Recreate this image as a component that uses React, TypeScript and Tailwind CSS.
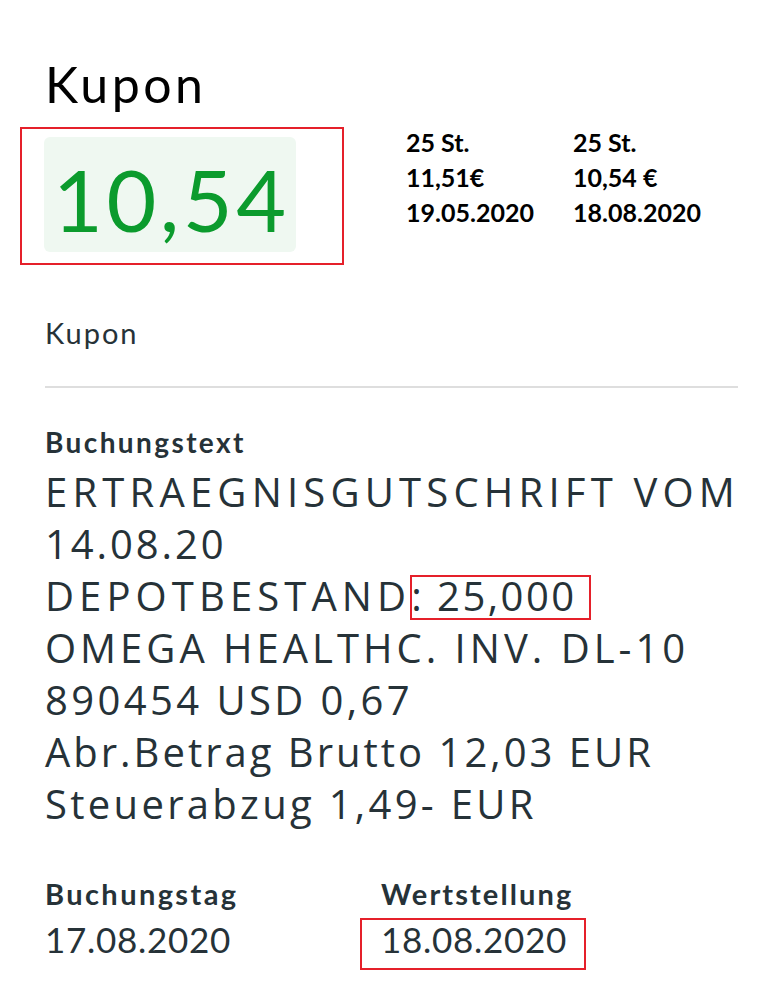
const App = () => {
    return (
        <div className="w-[774px] h-[998px] bg-white text-[#263238] font-['Lato',sans-serif] overflow-hidden">
            <h1 className="pl-[45px] pt-[59px] text-[50px] leading-[50px] tracking-[3.5px] text-black">Kupon</h1>

            <div className="flex mt-[18px]">
                <div className="ml-[20px] w-[324px] h-[138px] border-2 border-[#e5202a] pl-[22px] pt-[8px]">
                    <div className="w-[252px] h-[115px] rounded-md bg-[#eff8f1] flex items-center pl-[9px] pt-[8px]">
                        <span className="text-[86px] leading-none tracking-[3.5px] text-[#0b9b2d]">10,54</span>
                    </div>
                </div>

                <div className="flex font-bold text-black text-[25px] leading-[35px] -mt-[2px]">
                    <div className="ml-[62px] w-[167px]">
                        <p>25 St.</p>
                        <p>11,51€</p>
                        <p>19.05.2020</p>
                    </div>
                    <div>
                        <p>25 St.</p>
                        <p>10,54 €</p>
                        <p>18.08.2020</p>
                    </div>
                </div>
            </div>

            <div className="pl-[45px] pr-[36px]">
                <p className="mt-[52px] text-[29px] leading-[32px] tracking-[2px]">Kupon</p>
                <div className="mt-[37px] h-[2px] bg-[#dedede]" />

                <p className="mt-[38px] text-[28px] leading-[32px] tracking-[2.4px] font-bold">Buchungstext</p>
                <div className="mt-[8px] font-['Open_Sans',sans-serif] text-[40px] leading-[52px] whitespace-nowrap">
                    <p className="tracking-[5.2px]">ERTRAEGNISGUTSCHRIFT VOM</p>
                    <p className="tracking-[2.9px]">14.08.20</p>
                    <p className="tracking-[5.1px]">
                        DEPOTBESTAND
                        <span className="relative inline-block tracking-[2.5px]">
                            : 25,000
                            <span className="absolute -left-[1px] -right-[14px] top-[5px] bottom-[2px] border-2 border-[#e5202a]" />
                        </span>
                    </p>
                    <p className="tracking-[4px]">OMEGA HEALTHC. INV. DL-10</p>
                    <p className="tracking-[3.4px]">890454 USD 0,67</p>
                    <p className="tracking-[3px]">Abr.Betrag Brutto 12,03 EUR</p>
                    <p className="tracking-[3.3px]">Steuerabzug 1,49- EUR</p>
                </div>

                <div className="flex mt-[46px]">
                    <div className="w-[336px]">
                        <p className="text-[29px] leading-[36px] tracking-[2.4px] font-bold">Buchungstag</p>
                        <p className="mt-[5px] text-[35px] leading-[44px] tracking-[0.7px]">17.08.2020</p>
                    </div>
                    <div>
                        <p className="text-[29px] leading-[36px] tracking-[2.1px] font-bold">Wertstellung</p>
                        <p className="relative mt-[5px] text-[35px] leading-[44px] tracking-[0.7px]">
                            18.08.2020
                            <span className="absolute -left-[21px] top-[1px] w-[226px] h-[52px] border-2 border-[#e5202a]" />
                        </p>
                    </div>
                </div>
            </div>
        </div>
    )
}

export default App;
